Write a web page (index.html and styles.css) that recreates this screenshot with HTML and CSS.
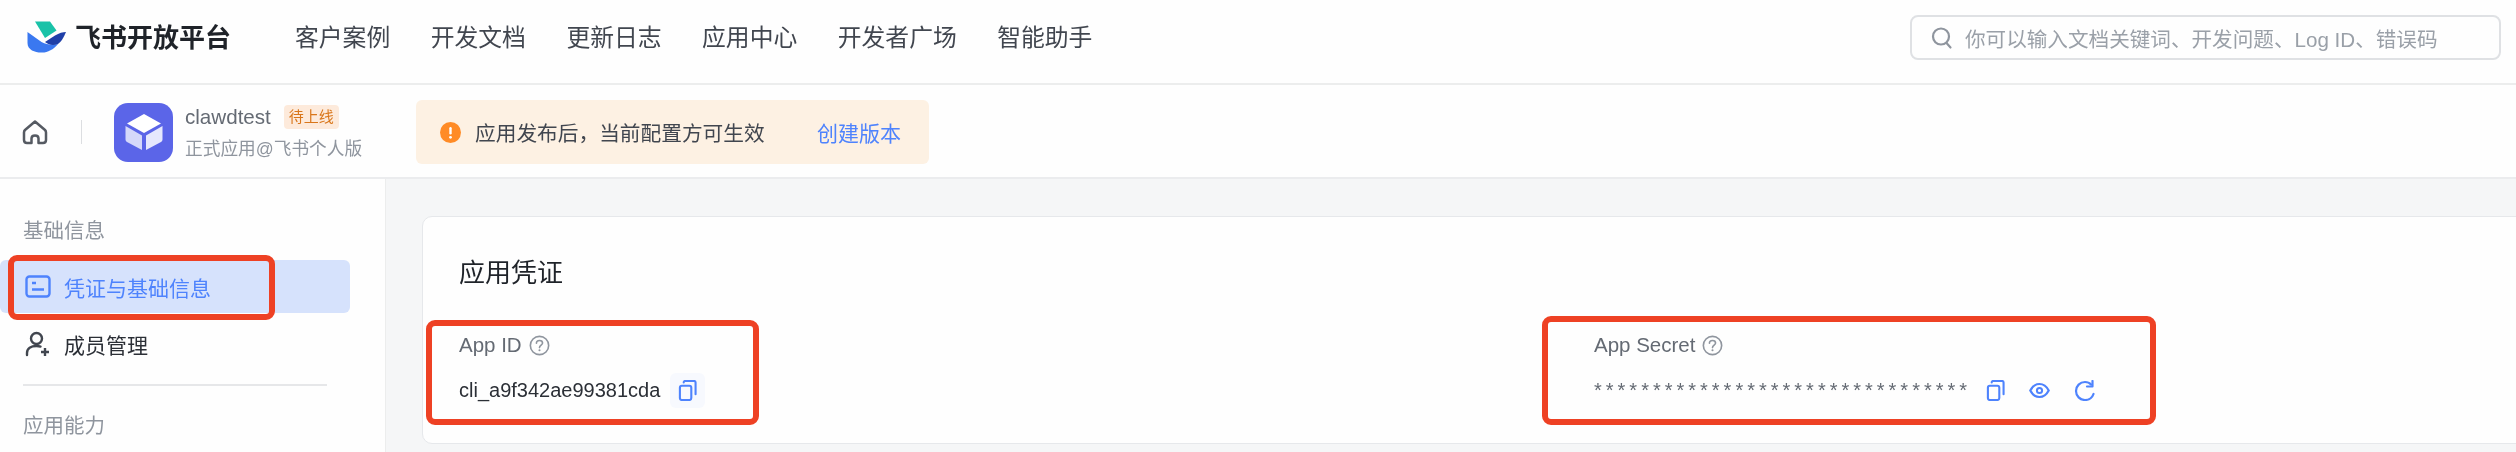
FILE: index.html
```html
<!DOCTYPE html>
<html lang="zh-CN">
<head>
    <meta charset="UTF-8">
    <title>飞书开放平台</title>
    <link rel="stylesheet" href="styles.css">
</head>
<body>
    <svg class="defs" width="0" height="0">
        <symbol id="copy" viewBox="0 0 20 22">
            <rect x="2" y="6" width="12" height="15" rx="2" fill="none" stroke="currentColor" stroke-width="2.200"/>
            <path d="M6 2.5V2.4C6 1.6 6.6 1 7.4 1H17C17.9 1 18.5 1.6 18.5 2.5V15" fill="none" stroke="currentColor" stroke-width="2.200" stroke-linecap="round"/>
        </symbol>
        <symbol id="help" viewBox="0 0 22 22">
            <circle cx="11" cy="11" r="9.6" fill="none" stroke="currentColor" stroke-width="1.7"/>
            <path d="M7.8 8.6C7.8 6.8 9.2 5.7 11 5.7S14.2 6.9 14.2 8.5C14.2 10.6 11 10.8 11 13.2" fill="none" stroke="currentColor" stroke-width="1.7" stroke-linecap="round"/>
            <circle cx="11" cy="16" r="1.1" fill="currentColor"/>
        </symbol>
    </svg>

    <header class="topbar">
        <a class="logo">
            <svg class="logo-mark" width="40" height="33" viewBox="0 0 40 33">
                <path d="M8 0.500H23L29.500 9.500L18 17Z" fill="#19c2a8"/>
                <path d="M0.500 11L14.500 21C20 24 26 24 31 23C26 29 20 32 14 31.500C8 31.500 0.500 29 0.500 22Z" fill="#3a78f0"/>
                <path d="M18 21L28 14.500C32 12 36 11 39 11C37 16 34 21 31 23C26 25 22 24 18 21Z" fill="#1f3fa8"/>
            </svg>
            <span>飞书开放平台</span>
        </a>
        <nav class="topnav">
            <a>客户案例</a>
            <a>开发文档</a>
            <a>更新日志</a>
            <a>应用中心</a>
            <a>开发者广场</a>
            <a>智能助手</a>
        </nav>
        <div class="search">
            <svg width="22" height="24" viewBox="0 0 22 24">
                <circle cx="10" cy="10.500" r="8" fill="none" stroke="#8f959e" stroke-width="2.200"/>
                <path d="M15.500 17L19.500 21.500" stroke="#8f959e" stroke-width="2.200" stroke-linecap="round"/>
            </svg>
            <span>你可以输入文档关键词、开发问题、Log ID、错误码</span>
        </div>
    </header>

    <section class="appbar">
        <svg class="home" width="26" height="26" viewBox="0 0 26 26">
            <path d="M3 11L13 2.500L23 11Q24 12 24 13.500V21Q24 24 21 24H16.500V19.500C16.500 17.500 15 16.500 13 16.500S9.500 17.500 9.500 19.500V24H5Q2 24 2 21V13.500Q2 12 3 11Z" fill="none" stroke="#555a62" stroke-width="2.500" stroke-linejoin="round"/>
        </svg>
        <i class="vline"></i>
        <div class="app-icon">
            <svg width="40" height="38" viewBox="0 0 40 38">
                <path d="M20 1L37 10.500L20 20L3 10.500Z" fill="#fff"/>
                <path d="M1.500 13L18 22.500V37L3 29Q1.500 28.200 1.500 26.500Z" fill="#d5d8fa"/>
                <path d="M38.500 13L22 22.500V37L37 29Q38.500 28.200 38.500 26.500Z" fill="#e6e8fd"/>
            </svg>
        </div>
        <div class="app-info">
            <div class="app-name">clawdtest <span class="badge">待上线</span></div>
            <div class="app-type">正式应用@飞书个人版</div>
        </div>
        <div class="notice">
            <svg width="21" height="21" viewBox="0 0 21 21">
                <circle cx="10.500" cy="10.500" r="10.500" fill="#ff8b26"/>
                <rect x="9.300" y="5" width="2.400" height="7.500" rx="1.200" fill="#fff"/>
                <circle cx="10.500" cy="15.300" r="1.400" fill="#fff"/>
            </svg>
            <span class="notice-text">应用发布后，当前配置方可生效</span>
            <a class="notice-link">创建版本</a>
        </div>
    </section>

    <div class="main">
        <aside class="sidebar">
            <div class="side-title">基础信息</div>
            <a class="side-item current">
                <svg width="26" height="23" viewBox="0 0 26 23">
                    <rect x="1.500" y="1.500" width="23" height="20" rx="3" fill="none" stroke="currentColor" stroke-width="2.400"/>
                    <path d="M7 8H11M7 14.500H19" stroke="currentColor" stroke-width="2.400"/>
                </svg>
                <span>凭证与基础信息</span>
            </a>
            <a class="side-item">
                <svg width="26" height="26" viewBox="0 0 26 26">
                    <circle cx="11.500" cy="7.500" r="5.500" fill="none" stroke="#41464f" stroke-width="2.400"/>
                    <path d="M2 24V22C2 17.500 6 15 11.500 15C13 15 14.500 15.200 15.500 15.600" fill="none" stroke="#41464f" stroke-width="2.400" stroke-linecap="round"/>
                    <path d="M20 17V25M16 21H24" stroke="#41464f" stroke-width="2.400"/>
                </svg>
                <span>成员管理</span>
            </a>
            <div class="side-line"></div>
            <div class="side-title">应用能力</div>
        </aside>
        <main class="content">
            <div class="card">
                <h2>应用凭证</h2>
                <div class="fields">
                    <div class="field">
                        <div class="field-label">App ID <svg class="help" width="21" height="21"><use href="#help"/></svg></div>
                        <div class="field-value">
                            <span>cli_a9f342ae99381cda</span>
                            <span class="copy-btn"><svg width="19" height="21"><use href="#copy"/></svg></span>
                        </div>
                    </div>
                    <div class="field">
                        <div class="field-label">App Secret <svg class="help" width="21" height="21"><use href="#help"/></svg></div>
                        <div class="field-value">
                            <span class="stars">********************************</span>
                            <span class="tools">
                                <svg width="19" height="21"><use href="#copy"/></svg>
                                <svg width="21" height="21" viewBox="0 0 21 21">
                                    <path d="M1.300 10.500C3.500 6.300 6.700 4 10.500 4S17.500 6.300 19.700 10.500C17.500 14.700 14.300 17 10.500 17S3.500 14.700 1.300 10.500Z" fill="none" stroke="currentColor" stroke-width="2.200"/>
                                    <circle cx="10.500" cy="10.500" r="2.600" fill="none" stroke="currentColor" stroke-width="2"/>
                                </svg>
                                <svg width="21" height="21" viewBox="0 0 21 21">
                                    <path d="M17 4.500C15.500 2.800 13.300 2 11 2C6 2 2 6 2 11S6 20 11 20C15 20 18.300 17.500 19.500 14" fill="none" stroke="currentColor" stroke-width="2.200" stroke-linecap="round"/>
                                    <path d="M18.500 1V6.500H13" fill="none" stroke="currentColor" stroke-width="2.200" stroke-linecap="round" stroke-linejoin="round"/>
                                </svg>
                            </span>
                        </div>
                    </div>
                </div>
            </div>
        </main>
    </div>

    <!-- 标注框 -->
    <div class="mark mark-nav"></div>
    <div class="mark mark-id"></div>
    <div class="mark mark-secret"></div>
</body>
</html>
```

FILE: styles.css
```css
* {
    margin: 0;
    padding: 0;
    box-sizing: border-box;
}
html, body {
    width: 2516px;
    height: 452px;
    overflow: hidden;
}
body {
    position: relative;
    background-color: #fefefe;
    color: #2b2f36;
    font-family: "Liberation Sans", "Noto Sans CJK SC", sans-serif;
    font-size: 21px;
    filter: blur(0.5px); /*原图本身有点糊*/
}
.defs {
    position: absolute;
}
svg {
    display: block;
    flex: none;
}

/* 顶部导航 */
.topbar {
    display: flex;
    align-items: center;
    height: 85px;
    padding: 0 15px 8px 27px;
    border-bottom: 2px solid #eceded;
}
.logo {
    display: flex;
    align-items: center;
    gap: 8px;
    width: 268px;
    font-size: 26px;
    font-weight: 700;
    color: #1f2329;
    line-height: 34px;
}
.topnav {
    display: flex;
    gap: 40.5px;
    font-size: 23.8px;
    line-height: 32px;
    color: #41464f;
}
.search {
    display: flex;
    align-items: center;
    gap: 12px;
    width: 591px;
    height: 45px;
    margin-left: auto;
    padding-left: 19px;
    border: 2px solid #dfe1e4;
    border-radius: 8px;
    color: #9aa0a8;
    font-size: 20.6px;
    white-space: nowrap;
}

/* 应用信息条 */
.appbar {
    display: flex;
    align-items: center;
    height: 94px;
    padding-left: 22px;
    padding-top: 2px;
    border-bottom: 2px solid #ebecee;
}
.vline {
    width: 1px;
    height: 24px;
    margin: 0 32px 0 33px;
    background-color: #dcdee1;
}
.app-icon {
    display: flex;
    align-items: center;
    justify-content: center;
    width: 59px;
    height: 59px;
    margin-right: 12px;
    border-radius: 14px;
    background-color: #5b65e8;
}
.app-info {
    width: 231px;
}
.app-name {
    display: flex;
    align-items: center;
    gap: 13px;
    height: 30px;
    font-size: 20.6px;
    color: #646a73;
}
.badge {
    width: 55px;
    height: 24px;
    border-radius: 4px;
    background-color: #fdeadb;
    color: #d9761a;
    font-size: 15px;
    line-height: 24px;
    text-align: center;
}
.app-type {
    margin-top: 3px;
    font-size: 17.7px;
    line-height: 28px;
    color: #8f959e;
    white-space: nowrap;
}
.notice {
    display: flex;
    align-items: center;
    width: 513px;
    height: 64px;
    padding-left: 24px;
    border-radius: 6px;
    background-color: #fdf1e3;
}
.notice-text {
    margin-left: 14px;
    width: 342px;
    color: #41464f;
    font-size: 20.7px;
}
.notice-link {
    color: #4e83fd;
}

.main {
    display: flex;
    height: 273px;
}

/* 左侧菜单 */
.sidebar {
    flex: none;
    width: 386px;
    padding-top: 38px;
    padding-right: 35px;
    border-right: 1px solid #eceded;
}
.side-title {
    padding-left: 23px;
    color: #8f959e;
    font-size: 20.5px;
    line-height: 28px;
}
.side-item {
    display: flex;
    align-items: center;
    gap: 13px;
    height: 53px;
    margin-top: 4px;
    padding-left: 25px;
    border-radius: 6px;
    font-size: 21px;
}
.current {
    margin-top: 15px;
    background-color: #d6e2fc;
    color: #4e83fd;
}
.side-line {
    height: 2px;
    margin: 14px 23px 26px 23px;
    background-color: #e6e7e9;
}

/* 内容区 */
.content {
    flex: 1;
    padding: 37px 0 0 36px;
    background-color: #f5f6f7;
}
.card {
    width: 2200px;
    height: 228px;
    padding: 41px 0 0 36px;
    border: 1px solid #e6e8eb;
    border-radius: 10px;
    background-color: #fefefe;
}
.card h2 {
    font-size: 26px;
    font-weight: 400;
    line-height: 30px;
    color: #1f2329;
}
.fields {
    display: grid;
    grid-template-columns: 1135px 1fr;
    margin-top: 43px;
}
.field-label {
    display: flex;
    align-items: center;
    gap: 7px;
    height: 28px;
    color: #646a73;
    font-size: 20.5px;
}
.help {
    color: #8f959e;
}
.field-value {
    display: flex;
    align-items: center;
    height: 30px;
    margin-top: 16px;
    font-size: 20px;
}
.copy-btn {
    display: flex;
    align-items: center;
    justify-content: center;
    width: 35px;
    height: 35px;
    margin-left: 10px;
    border-radius: 6px;
    background-color: #f7f9fe;
    color: #4e83fd;
}
.stars {
    width: 392px;
    color: #646a73;
    font-size: 20px;
    letter-spacing: 4px;
    white-space: nowrap;
}
.tools {
    display: flex;
    gap: 24px;
    color: #4e83fd;
}

/* 红色标注框，盖在页面上面 */
.mark {
    position: absolute;
    border: 6px solid #ee4124;
    border-radius: 9px;
}
.mark-nav {
    left: 8px;
    top: 255px;
    width: 267px;
    height: 65px;
}
.mark-id {
    left: 426px;
    top: 320px;
    width: 333px;
    height: 105px;
}
.mark-secret {
    left: 1542px;
    top: 316px;
    width: 614px;
    height: 109px;
}
```
